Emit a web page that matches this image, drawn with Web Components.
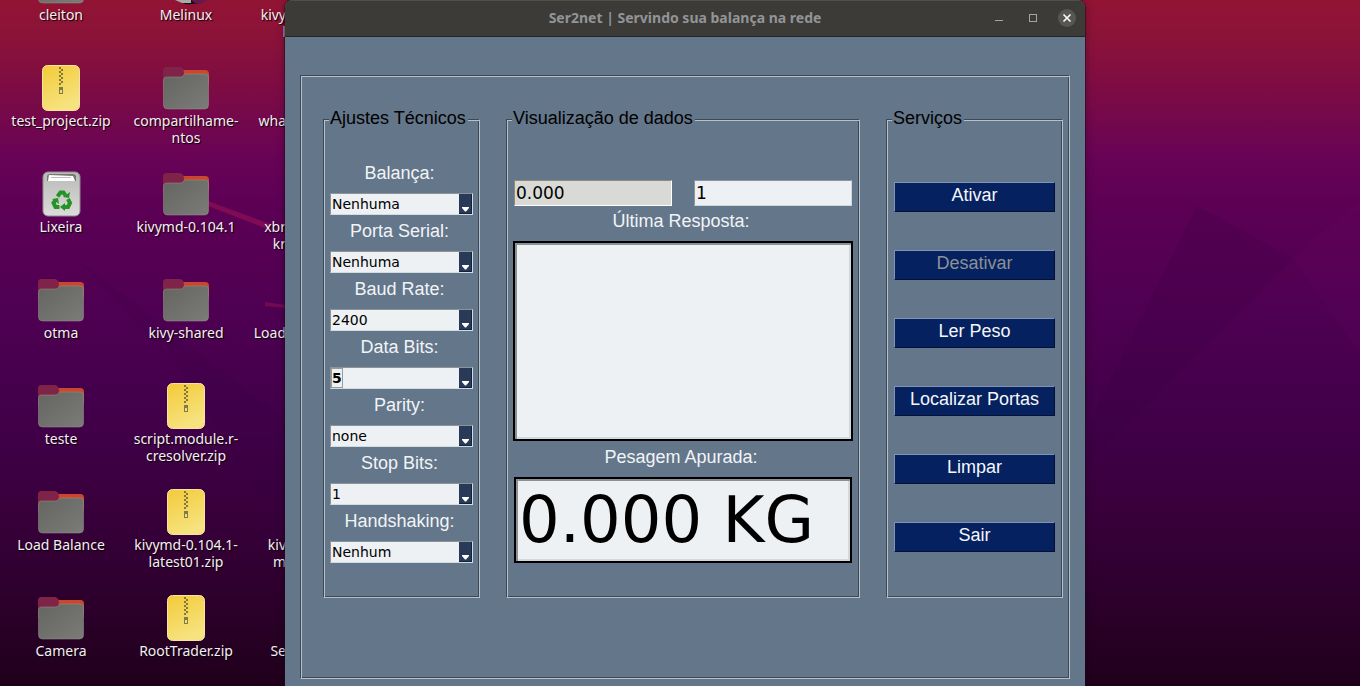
<!DOCTYPE html>
<html lang="pt-BR">
<head>
<meta charset="utf-8">
<title>Ser2net | Servindo sua balança na rede</title>
<style>
  html, body { margin: 0; height: 100%; overflow: hidden; }
  body { background: #22001e; font-family: "Noto Sans", sans-serif; }
</style>
</head>
<body>
<desk-top>
  <desk-icons slot="icons">
    <desk-icon kind="folder">cleiton</desk-icon>
    <desk-icon kind="disc">Melinux</desk-icon>
    <desk-icon kind="hidden">kivy<br>l</desk-icon>
    <desk-icon kind="zip">test_project.zip</desk-icon>
    <desk-icon kind="folder">compartilhame-<br>ntos</desk-icon>
    <desk-icon kind="hidden">wha</desk-icon>
    <desk-icon kind="trash">Lixeira</desk-icon>
    <desk-icon kind="folder">kivymd-0.104.1</desk-icon>
    <desk-icon kind="hidden">xbr<br>kr</desk-icon>
    <desk-icon kind="folder">otma</desk-icon>
    <desk-icon kind="folder">kivy-shared</desk-icon>
    <desk-icon kind="hidden">Load</desk-icon>
    <desk-icon kind="folder">teste</desk-icon>
    <desk-icon kind="zip">script.module.r-<br>cresolver.zip</desk-icon>
    <desk-icon kind="hidden"></desk-icon>
    <desk-icon kind="folder">Load Balance</desk-icon>
    <desk-icon kind="zip">kivymd-0.104.1-<br>latest01.zip</desk-icon>
    <desk-icon kind="hidden">kiv<br>m</desk-icon>
    <desk-icon kind="folder">Camera</desk-icon>
    <desk-icon kind="zip">RootTrader.zip</desk-icon>
    <desk-icon kind="hidden">Se</desk-icon>
  </desk-icons>
  <app-window slot="window" heading="Ser2net | Servindo sua balança na rede">
    <group-frame class="tech" heading="Ajustes Técnicos">
      <combo-field label="Balança:" value="Nenhuma"></combo-field>
      <combo-field label="Porta Serial:" value="Nenhuma"></combo-field>
      <combo-field label="Baud Rate:" value="2400"></combo-field>
      <combo-field label="Data Bits:" value="5" current></combo-field>
      <combo-field label="Parity:" value="none"></combo-field>
      <combo-field label="Stop Bits:" value="1"></combo-field>
      <combo-field label="Handshaking:" value="Nenhum"></combo-field>
    </group-frame>
    <group-frame class="view" heading="Visualização de dados">
      <data-view></data-view>
    </group-frame>
    <group-frame class="services" heading="Serviços">
      <service-list>
        <service-button>Ativar</service-button>
        <service-button disabled>Desativar</service-button>
        <service-button>Ler Peso</service-button>
        <service-button>Localizar Portas</service-button>
        <service-button>Limpar</service-button>
        <service-button>Sair</service-button>
      </service-list>
    </group-frame>
  </app-window>
</desk-top>

<script>
function define(name, render) {
  customElements.define(name, class extends HTMLElement {
    connectedCallback() {
      if (this.shadowRoot) return;
      this.attachShadow({ mode: "open" }).innerHTML = render(this);
    }
  });
}

/* Wallpaper, icon area on the left, application window in the middle */
define("desk-top", () => `
<style>
  :host {
    display: grid; position: relative; overflow: hidden;
    grid-template-columns: 285px minmax(0, 1fr) 275px; grid-template-rows: 100vh;
    height: 100vh;
    background: linear-gradient(#921434 0%, #8a1239 6%, #7b0b46 14%, #680356 23%, #5b0055 31%, #4f0052 45%, #43004b 59%, #38003b 75%, #2c002b 88%, #20001b 100%);
  }
  .paper { position: absolute; inset: 0; width: 100%; height: 100%; }
  ::slotted(*) { position: relative; }
</style>
<svg class="paper" viewBox="0 0 1360 686" preserveAspectRatio="none" aria-hidden="true">
  <path d="M1197 206 1293 258 1088 462 1088 425z" fill="#30003f" opacity=".16"/>
  <path d="M1293 258 1360 200 1360 355z" fill="#7a0c6c" opacity=".1"/>
  <path d="M80 262 285 420 285 540 180 370z" fill="#30003f" opacity=".12"/>
  <path d="M208 201 270 224 270 230 208 206z" fill="#971355" opacity=".6"/>
  <path d="M265 302 286 305 286 308 265 306z" fill="#971355" opacity=".5"/>
</svg>
<slot name="icons"></slot>
<slot name="window"></slot>`);

define("desk-icons", () => `
<style>
  :host {
    display: grid; grid-template-columns: 122px 122px 36px; column-gap: 3px;
    grid-auto-rows: 106px; align-content: start; margin-top: -42px;
  }
</style><slot></slot>`);

const PICTURES = {
  folder: `
    <g transform="translate(0 -1)">
    <path d="M1 8q0-4 4-4h13l4 3h21q4 0 4 4v14H1z" fill="#7f2349"/>
    <path d="M20 7h23q4 0 4 4v10H22z" fill="#c9472f"/>
    <path d="M1 8q0-4 4-4h12q3 0 4 2 1 2 1 4l-2 6H1z" fill="#802349"/>
    <path d="M1.500 17q0-3 3-3h14c3 0 3-3 6-3h19q3 0 3 3v28q0 4-4 4H5.500q-4 0-4-4z" fill="url(#g)" stroke="#96938c" stroke-opacity=".5"/>
    </g>`,
  zip: `
    <rect x="5.500" y="1.500" width="37" height="45" rx="5" fill="url(#y)" stroke="#f8e2a6"/>
    <path d="M22 3h2v2h-2zM24 5h2v2h-2zM22 7h2v2h-2zM24 9h2v2h-2zM22 11h2v2h-2zM24 13h2v2h-2zM22 15h2v2h-2zM24 17h2v2h-2zM22 19h2v2h-2z" fill="#87763a"/>
    <path d="M22 23h4v7h-4z" fill="#7f7c45"/><path d="M23 26h2v3h-2z" fill="#f4dd75"/>`,
  trash: `
    <rect x="6" y="2" width="37" height="44" rx="5" fill="url(#t)" stroke="#8f8f8c" stroke-width="1"/>
    <path d="M10 11V7q0-3 3-3h23q3 0 3 3v4z" fill="#777773"/>
    <path d="M11 11l1-6 24 1 2 5z" fill="#fff"/><path d="M14 7.500h20" stroke="#bbb"/>
    <g fill="none" stroke="#259326" stroke-width="4">
      <path d="M20.500 26.500l3-4h3l2 3"/><path d="M31 29l2 4-2 4h-4"/><path d="M22.500 37h-4l-2-4 2-3"/>
    </g>
    <path d="M26 27l6 1 1-6zM28 33v8l-5-4zM15 29l6-1 1 6z" fill="#259326"/>`,
  disc: `
    <path d="M6 38l34 2v4q-8 3-17 2z" fill="#15120f"/><path d="M13 42l16-1v4H20z" fill="#aaa"/>
    <circle cx="37" cy="37" r="9" fill="#6b174f"/>`,
  hidden: ``
};

define("desk-icon", el => {
  const kind = el.getAttribute("kind");
  return `
<style>
  :host { display: flex; flex-direction: column; align-items: ${kind === "hidden" ? "flex-end" : "center"}; }
  svg { display: block; width: 48px; height: 48px; }
  span {
    font: 14px/17px "Noto Sans", sans-serif; color: #f4eef4; white-space: nowrap;
    text-align: ${kind === "hidden" ? "right" : "center"}; text-shadow: 1px 1px 1px #000;
  }
</style>
<svg viewBox="0 0 48 48" aria-hidden="true">
  <defs>
    <linearGradient id="g" x2="1" y2="1"><stop stop-color="#646560"/><stop offset="1" stop-color="#7b7c77"/></linearGradient>
    <linearGradient id="y" x2=".4" y2="1"><stop stop-color="#f3cb38"/><stop offset="1" stop-color="#f6e27f"/></linearGradient>
    <linearGradient id="t" x2="0" y2="1"><stop stop-color="#b9b9b7"/><stop offset="1" stop-color="#dcdcda"/></linearGradient>
  </defs>${PICTURES[kind]}
</svg>
<span><slot></slot></span>`;
});

define("app-window", el => `
<style>
  :host {
    display: flex; flex-direction: column; box-sizing: border-box; min-height: 100vh;
    background: #64768a; border-radius: 8px 8px 0 0; overflow: hidden;
    box-shadow: 0 0 0 1px rgba(30, 10, 30, .5), 0 0 8px rgba(0, 0, 0, .35);
  }
  header {
    display: grid; grid-template-columns: 1fr auto 1fr; align-items: center;
    height: 36px; flex: none; background: #3c3b37; border-bottom: 1px solid #20242c;
    box-shadow: inset 0 1px #50504b;
  }
  h1 { grid-column: 2; margin: 0; font: bold 14px/20px "Noto Sans", sans-serif; color: #929497; }
  nav { display: flex; justify-content: flex-end; gap: 14px; padding-right: 8px; }
  button { width: 20px; height: 20px; padding: 0; border: 0; background: none; }
  svg { display: block; }
  main {
    flex: 1; display: grid; grid-template-columns: 157px minmax(0, 1fr) 177px;
    column-gap: 26px; align-content: start; margin: 38px 15px 7px; padding: 33px 6px 0 22px;
    border: 1px solid; border-color: #3b4855 #b5c0ca #b5c0ca #3b4855;
    box-shadow: inset 1px 1px #b5c0ca, inset -1px -1px #3b4855;
  }
</style>
<header>
  <h1>${el.getAttribute("heading")}</h1>
  <nav>
    <button aria-label="Minimizar"><svg width="20" height="20"><path d="M6 12.500h8" stroke="#a3a4a6"/></svg></button>
    <button aria-label="Maximizar"><svg width="20" height="20"><rect x="6.500" y="6.500" width="7" height="7" fill="none" stroke="#a3a4a6"/></svg></button>
    <button aria-label="Fechar"><svg width="20" height="20"><circle cx="10" cy="10" r="9" fill="#565653"/><path d="M6.500 6.500l7 7M13.500 6.500l-7 7" stroke="#fff" stroke-width="1.600"/></svg></button>
  </nav>
</header>
<main><slot></slot></main>`);

define("group-frame", el => `
<style>
  :host { display: flex; min-width: 0; }
  fieldset {
    flex: 1; min-width: 0; margin: 0; padding: 0 6px 34px;
    border: 1px solid; border-color: #3b4855 #b5c0ca #b5c0ca #3b4855;
    box-shadow: inset 1px 1px #b5c0ca, inset -1px -1px #3b4855;
  }
  legend {
    padding: 0 2px 3px 1px; margin-left: -1px; background: #64768a;
    font: 18px/18px "Liberation Sans", sans-serif; color: #000; white-space: nowrap;
  }
</style>
<fieldset><legend>${el.getAttribute("heading")}</legend><slot></slot></fieldset>`);

define("combo-field", el => `
<style>
  :host { display: block; margin-bottom: 6px; }
  :host(:first-child) { margin-top: 33px; }
  :host(:last-child) { margin-bottom: 0; }
  label { display: block; margin-bottom: 10px; padding-right: 4px; text-align: center; font: 18px/20px "Liberation Sans", sans-serif; color: #f1f4f7; }
  .box { position: relative; }
  select {
    appearance: none; display: block; width: 100%; height: 22px; margin: 0; padding: 0 14px 0 1px;
    border: 1px solid; border-color: #8e9299 #cfdde3 #cfdde3 #8e9299; border-radius: 0;
    background: #edf1f4; color: #000; outline: 0;
    font: 14px/20px "DejaVu Sans", sans-serif;
  }
  :host([current]) select { font-weight: bold; }
  i { position: absolute; left: 1px; top: 1px; width: 10px; height: 18px; border: 1px solid #9b9b98; }
  svg { position: absolute; right: 1px; top: 1px; pointer-events: none; }
</style>
<label for="s">${el.getAttribute("label")}</label>
<div class="box">
  <select id="s"><option>${el.getAttribute("value")}</option></select>
  ${el.hasAttribute("current") ? "<i></i>" : ""}
  <svg width="13" height="20" aria-hidden="true"><path d="M0 0h13v20H0z" fill="#283a57"/><path d="M12.500 0v19.500H0" fill="none" stroke="#14213a"/><path d="M3 13h7v1L7 17.500H6L3 14z" fill="#fff"/></svg>
</div>`);

define("data-view", () => `
<style>
  :host { display: flex; flex-direction: column; margin-top: 50px; }
  .pair { display: grid; grid-template-columns: 1fr 1fr; column-gap: 22px; margin: 0 1px 5px; }
  input, textarea { box-sizing: border-box; display: block; width: 100%; margin: 0; border-radius: 0; outline: 0; background: #edf1f4; color: #000; font-family: "DejaVu Sans", sans-serif; }
  .pair input { height: 26px; padding: 0 1px; border: 1px solid; border-color: #8e9299 #cfd6da #cfd6da #8e9299; font-size: 17px; }
  .pair input[readonly] { background: #d9dad6; border-color: #8e8a80 #fff #fff #8e8a80; }
  label { margin-bottom: 10px; padding-right: 4px; text-align: center; font: 18px/20px "Liberation Sans", sans-serif; color: #f1f4f7; }
  textarea, .total { border: 2px solid #000; box-shadow: inset 2px 2px #8e9194, inset -2px -2px #d3d8da; }
  textarea { height: 200px; margin-bottom: 6px; padding: 4px; resize: none; font-size: 14px; }
  .result { margin: 0 1px; }
  .total { height: 86px; padding: 0 3px; font-size: 64px; }
</style>
<div class="pair">
  <input value="0.000" readonly aria-label="Peso">
  <input value="1" aria-label="Intervalo">
</div>
<label for="last">Última Resposta:</label>
<textarea id="last"></textarea>
<label for="total">Pesagem Apurada:</label>
<div class="result"><input class="total" id="total" value="0.000 KG"></div>`);

define("service-list", () => `
<style>:host { display: grid; row-gap: 38px; margin: 52px 1px 0; }</style><slot></slot>`);

define("service-button", el => `
<style>
  :host { display: block; }
  button {
    display: block; width: 100%; height: 30px; margin: 0; padding: 0 0 4px;
    border: 1px solid; border-color: #8093b4 #031234 #031234 #8093b4; border-radius: 0;
    background: #05215f; color: #f4f7fa; font: 18px/20px "Liberation Sans", sans-serif;
  }
  button:disabled { color: #8c9198; }
</style>
<button type="button"${el.hasAttribute("disabled") ? " disabled" : ""}><slot></slot></button>`);
</script>
</body>
</html>
